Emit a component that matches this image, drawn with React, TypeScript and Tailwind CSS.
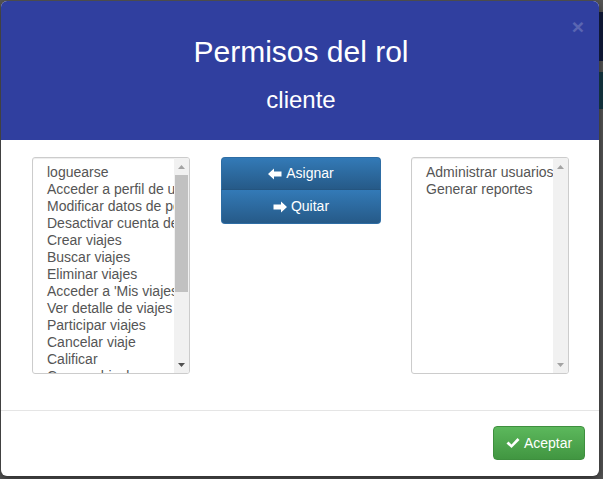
import React from "react";

const disponibles = [
  "loguearse",
  "Acceder a perfil de usuario",
  "Modificar datos de perfil",
  "Desactivar cuenta de usuario",
  "Crear viajes",
  "Buscar viajes",
  "Eliminar viajes",
  "Acceder a 'Mis viajes'",
  "Ver detalle de viajes",
  "Participar viajes",
  "Cancelar viaje",
  "Calificar",
  "Crear vehiculos",
];

const asignados = ["Administrar usuarios", "Generar reportes"];

function Arrow({ dir, active }: { dir: "up" | "down"; active: boolean }) {
  return (
    <svg width="7" height="4" viewBox="0 0 7 4" className="block">
      <polygon
        points={dir === "up" ? "0,4 3.5,0 7,4" : "0,0 7,0 3.5,4"}
        fill={active ? "#505050" : "#a3a3a3"}
      />
    </svg>
  );
}

function ListBox({ items, thumb }: { items: string[]; thumb: boolean }) {
  return (
    <div className="flex h-[217px] w-[158px] shrink-0 overflow-hidden rounded-[3px] border border-[#ccc] bg-white shadow-[inset_0_1px_1px_rgba(0,0,0,0.075)]">
      <div className="min-w-0 flex-1 overflow-hidden pl-[14px] pt-[6px] text-[14px] leading-[17px] text-[#555]">
        {items.map((it) => (
          <div key={it} className="whitespace-nowrap">
            {it}
          </div>
        ))}
      </div>
      <div className="flex w-[15px] shrink-0 flex-col items-center bg-[#f1f1f1]">
        <div className="flex h-[17px] items-center justify-center">
          <Arrow dir="up" active={false} />
        </div>
        <div className="flex-1 w-full px-[1px]">
          {thumb && <div className="h-[117px] w-full bg-[#c1c1c1]" />}
        </div>
        <div className="flex h-[17px] items-center justify-center">
          <Arrow dir="down" active={thumb} />
        </div>
      </div>
    </div>
  );
}

export default function App() {
  return (
    <div
      className="flex h-[479px] w-[603px] overflow-hidden bg-[#555] pl-[1px] pt-[1px]"
      style={{ fontFamily: '"Liberation Sans", Arial, sans-serif' }}
    >
      <div className="flex h-[475px] w-[598px] shrink-0 flex-col overflow-hidden rounded-[6px] bg-white shadow-[0_3px_9px_rgba(0,0,0,0.5)]">
        <div className="relative flex h-[139px] flex-col items-center bg-[#303f9f] text-white">
          <div className="ml-[2px] mt-[33px] text-[30px] leading-[36px]">Permisos del rol</div>
          <div className="ml-[2px] mt-[16px] text-[24px] leading-[28px]">cliente</div>
          <span className="absolute right-[15px] top-[15px] text-[21px] font-bold leading-[21px] text-white opacity-20">
            ×
          </span>
        </div>

        <div className="flex h-[270px] items-start pl-[31px] pt-[17px]">
          <ListBox items={disponibles} thumb />
          <div className="ml-[31px] flex w-[160px] flex-col">
            <button className="flex h-[33px] items-center justify-center gap-[4px] rounded-t-[4px] border border-[#2e6da4] border-b-[#245580] bg-gradient-to-b from-[#337ab7] to-[#265a88] text-[14px] text-white">
              <svg width="14" height="12" viewBox="0 0 14 12">
                <path d="M0 6 L6 0.5 L6 3.5 L13.5 3.5 L13.5 8.5 L6 8.5 L6 11.5 Z" fill="#fff" />
              </svg>
              Asignar
            </button>
            <button className="flex h-[34px] items-center justify-center gap-[4px] rounded-b-[4px] border border-t-0 border-[#2e6da4] bg-gradient-to-b from-[#337ab7] to-[#265a88] text-[14px] text-white">
              <svg width="14" height="12" viewBox="0 0 14 12">
                <path d="M14 6 L8 0.5 L8 3.5 L0.5 3.5 L0.5 8.5 L8 8.5 L8 11.5 Z" fill="#fff" />
              </svg>
              Quitar
            </button>
          </div>
          <div className="ml-[30px]">
            <ListBox items={asignados} thumb={false} />
          </div>
        </div>

        <div className="flex flex-1 items-start justify-end border-t border-[#e5e5e5] pr-[14px] pt-[15px]">
          <button className="flex h-[34px] w-[92px] items-center justify-center gap-[4px] rounded-[4px] border border-[#3e8f3e] bg-gradient-to-b from-[#5cb85c] to-[#419641] text-[14px] text-white">
            <svg width="14" height="12" viewBox="0 0 14 12">
              <path d="M0.5 6.5 L2.5 4.5 L5.5 7.5 L11.5 1 L13.5 3 L5.5 11 Z" fill="#fff" />
            </svg>
            Aceptar
          </button>
        </div>
      </div>
      <div className="flex flex-1 flex-col pt-[11px]">
        <div className="h-[49px] bg-[#0f1733]" />
        <div className="mt-[11px] h-[37px] bg-[#12303a]" />
      </div>
    </div>
  );
}
